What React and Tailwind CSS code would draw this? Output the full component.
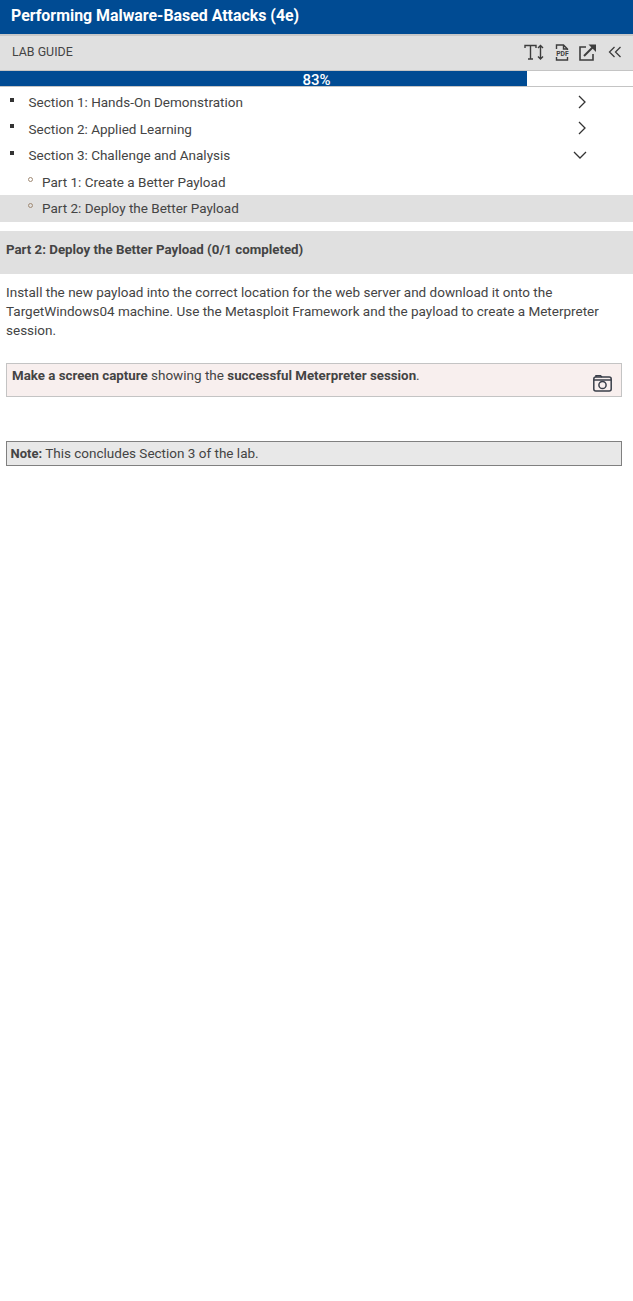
const ic = "#3d3d3d";

function Chevron({ down }) {
  return (
    <svg width="14" height="14" viewBox="0 0 14 14" fill="none" stroke="#333" strokeWidth="1.3">
      {down ? <path d="M1 4l6 6 6-6" /> : <path d="M4 1l6 6-6 6" />}
    </svg>
  );
}

function Row({ label, chevron, sub, active }) {
  return (
    <div className={`relative flex items-center h-[26.5px] ${active ? "bg-[#e0e0e0]" : ""}`}>
      {sub ? (
        <span className="w-[5px] h-[5px] rounded-full border border-[#a08a74] ml-[28px] mr-[9px] mb-[5px]" />
      ) : (
        <span className="w-[4px] h-[4px] bg-[#333] ml-[10px] mr-[14.5px] mb-[5px]" />
      )}
      <span className="text-[13.5px] text-[#444]">{label}</span>
      {chevron && (
        <span className={`absolute top-[5.5px] ${chevron === "down" ? "left-[573px]" : "left-[575px]"}`}>
          <Chevron down={chevron === "down"} />
        </span>
      )}
    </div>
  );
}

export default function App() {
  return (
    <div className="w-[633px] min-h-[1301px] bg-white font-['Roboto',sans-serif] text-[#444]">
      <div className="h-[34px] bg-[#004b93] flex items-center pl-[11px] text-white font-bold text-[15.9px] pb-[3px]">
        Performing Malware-Based Attacks (4e)
      </div>
      <div className="h-[37px] bg-[#e0e0e0] border-t-2 border-t-[#c8c8c8] border-b border-b-[#c4c4c4] flex items-center justify-between pl-[12px] pr-[11px] pb-[2px]">
        <span className="text-[12.4px] text-[#444]">LAB GUIDE</span>
        <div className="flex items-center gap-[9px]">
          <svg width="21" height="17" viewBox="0 0 21 17" fill="none" stroke={ic} strokeWidth="1.4">
            <path d="M1 4V1.5h11V4M6.5 1.5V15M4 15h5" />
            <path d="M16.5 1.5V15M14 4l2.5-2.5L19 4M14 12.5l2.5 2.5 2.5-2.5" />
          </svg>
          <svg width="14" height="17" viewBox="0 0 14 17" fill="none" stroke={ic} strokeWidth="1.4" className="ml-[1px]">
            <path d="M1.5 5V1h7l4 4v1M8.5 1v4h4M1.5 13v3h11v-3" />
            <text x="1.2" y="11.7" fontSize="6.8" fontWeight="700" fill={ic} stroke="none" fontFamily="Roboto">PDF</text>
          </svg>
          <svg width="18" height="17" viewBox="0 0 18 17" fill="none" stroke={ic} strokeWidth="1.6" className="ml-[1px]">
            <path d="M7 3H1v13h13v-6" />
            <path d="M5 12L14 3" strokeWidth="2" />
            <path d="M9.5 0.5H17V8z" fill={ic} stroke="none" />
          </svg>
          <svg width="14" height="12" viewBox="0 0 14 12" fill="none" stroke={ic} strokeWidth="1.3" className="ml-[2px]">
            <path d="M6.5 1L1.5 6l5 5M12.5 1l-5 5 5 5" />
          </svg>
        </div>
      </div>
      <div className="relative h-[16px] border-b border-b-[#c4c4c4]">
        <div className="h-[15px] w-[83.3%] bg-[#004b93]" />
        <span className="absolute inset-x-0 top-[1px] text-center text-white text-[15px] font-medium leading-[16px]">83%</span>
      </div>
      <div className="pt-[2px]">
        <Row label="Section 1: Hands-On Demonstration" chevron="right" />
        <Row label="Section 2: Applied Learning" chevron="right" />
        <Row label="Section 3: Challenge and Analysis" chevron="down" />
        <Row label="Part 1: Create a Better Payload" sub />
        <Row label="Part 2: Deploy the Better Payload" sub active />
      </div>
      <div className="mt-[9px] h-[43px] bg-[#e0e0e0] flex items-center pl-[6px] pb-[5px] text-[13.3px] font-bold text-[#444]">
        Part 2: Deploy the Better Payload (0/1 completed)
      </div>
      <p className="mt-[9px] px-[6px] text-[13.5px] leading-[19px] text-[#444]">
        Install the new payload into the correct location for the web server and download it onto the TargetWindows04 machine. Use the Metasploit Framework and the payload to create a Meterpreter session.
      </p>
      <div className="relative ml-[6px] mr-[11px] mt-[23px] h-[34px] bg-[#f8efee] border border-[#c4c4c4] pl-[5px] pt-[2px] text-[13.5px] leading-[19px]">
        <strong className="text-[13.3px]">Make a screen capture</strong> showing the <strong className="text-[13.3px]">successful Meterpreter session</strong>.
        <svg className="absolute left-[586px] top-[11px]" width="19" height="17" viewBox="0 0 19 17" fill="none" stroke="#3a3f4a" strokeWidth="1.5">
          <rect x="0.8" y="2" width="17.4" height="14" rx="2" />
          <path d="M3 2V0.8h4.5L9 2M0.8 5h17.4" />
          <circle cx="9.5" cy="10" r="3.6" />
        </svg>
      </div>
      <div className="ml-[6px] mr-[11px] mt-[44px] h-[25px] bg-[#e8e8e8] border border-[#808080] pl-[3.5px] flex items-center text-[13.5px]">
        <span><strong className="text-[13px]">Note:</strong> This concludes Section 3 of the lab.</span>
      </div>
    </div>
  );
}
